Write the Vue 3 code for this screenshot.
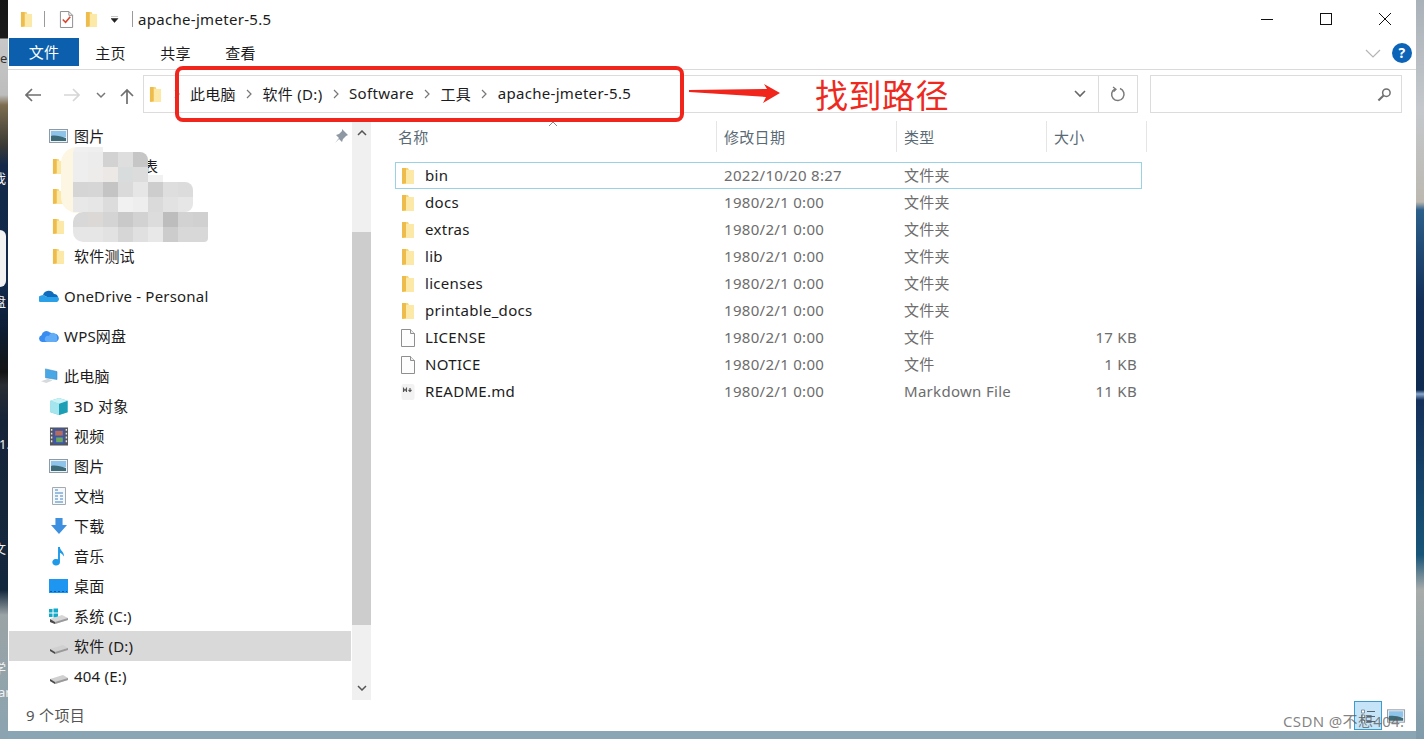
<script setup>
const tabs = ['主页', '共享', '查看']
const crumbs = ['此电脑', '软件 (D:)', 'Software', '工具', 'apache-jmeter-5.5']
const nav = [
  { label: '图片', icon: 'pic', depth: 1 },
  { label: '表', icon: 'folder', depth: 1, tail: true },
  { label: '', icon: 'folder', depth: 1 },
  { label: '', icon: 'folder', depth: 1 },
  { label: '软件测试', icon: 'folder', depth: 1 },
  { label: 'OneDrive - Personal', icon: 'onedrive', depth: 0, group: true },
  { label: 'WPS网盘', icon: 'wps', depth: 0, group: true },
  { label: '此电脑', icon: 'pc', depth: 0, group: true },
  { label: '3D 对象', icon: 'cube', depth: 1 },
  { label: '视频', icon: 'film', depth: 1 },
  { label: '图片', icon: 'pic', depth: 1 },
  { label: '文档', icon: 'doc', depth: 1 },
  { label: '下载', icon: 'down', depth: 1 },
  { label: '音乐', icon: 'note', depth: 1 },
  { label: '桌面', icon: 'desk', depth: 1 },
  { label: '系统 (C:)', icon: 'cdrive', depth: 1 },
  { label: '软件 (D:)', icon: 'drive', depth: 1, selected: true },
  { label: '404 (E:)', icon: 'drive', depth: 1 }
]
const files = [
  { name: 'bin', date: '2022/10/20 8:27', type: '文件夹', size: '', icon: 'folder', focus: true },
  { name: 'docs', date: '1980/2/1 0:00', type: '文件夹', size: '', icon: 'folder' },
  { name: 'extras', date: '1980/2/1 0:00', type: '文件夹', size: '', icon: 'folder' },
  { name: 'lib', date: '1980/2/1 0:00', type: '文件夹', size: '', icon: 'folder' },
  { name: 'licenses', date: '1980/2/1 0:00', type: '文件夹', size: '', icon: 'folder' },
  { name: 'printable_docs', date: '1980/2/1 0:00', type: '文件夹', size: '', icon: 'folder' },
  { name: 'LICENSE', date: '1980/2/1 0:00', type: '文件', size: '17 KB', icon: 'blank' },
  { name: 'NOTICE', date: '1980/2/1 0:00', type: '文件', size: '1 KB', icon: 'blank' },
  { name: 'README.md', date: '1980/2/1 0:00', type: 'Markdown File', size: '11 KB', icon: 'md' }
]
const columns = ['名称', '修改日期', '类型', '大小']
const mosaic = [
  ['#f0f0f0', '#efefef'],
  ['#eeeeee', '#ececec', '#d2d2d2', '#dedede', '#c6c6c6'],
  ['#eeeeee', '#eeeceb', '#ebe8e6', '#d9dcdc', '#dcdcdc'],
  ['#d5d5d5', '#d6d6d6', '#c4c4c4', '#dadada', '#e6e6e6', '#cdcdcd', '#dedede', '#dcdcdc'],
  ['#e8e8e8', '#e6e6e6', '#dcdcdc', '#f1f1f1', '#eeeeee', '#dadada', '#e2e2e2', '#e6e6e6'],
  ['#d8d8d8', '#dcd8d6', '#d4d4d4', '#c9c9c9', '#d2d2d2', '#dcdcdc', '#bdbdbd', '#d2d2d2', '#d0d0d0'],
  ['#e6e6e6', '#e6e6e6', '#e2e2e2', '#d6d6d6', '#e0e0e0', '#e8e8e8', '#cccccc', '#d8d8d8', '#d8d8d8']
]
</script>

<template>
  <div class="desktop">
    <svg class="sprite" width="0" height="0" aria-hidden="true">
      <symbol id="i-folder" viewBox="0 0 14 18">
        <path d="M2 1h5l1 2h4v14H2z" fill="#f8d775" />
        <path d="M5 3h8v14H5z" fill="#fce9a8" />
        <path d="M1 1h4v15l-4 1z" fill="#eebb4d" />
      </symbol>
      <symbol id="i-check" viewBox="0 0 16 20">
        <path d="M1.5 1.5h9l4 4v13h-13z" fill="#fff" stroke="#8a8a8a" />
        <path d="M10.5 1.5v4h4" fill="none" stroke="#8a8a8a" />
        <path d="M4 10l3 3 5-6" fill="none" stroke="#d9472f" stroke-width="1.7" />
      </symbol>
      <symbol id="i-pic" viewBox="0 0 20 16">
        <rect x=".5" y="1.5" width="18" height="13" fill="#eef3f8" stroke="#8e9aa6" />
        <rect x="2" y="3" width="15" height="6" fill="#8fc4ea" />
        <path d="M2 13V8c4-1 9 0 15 2v3z" fill="#3d6b78" />
      </symbol>
      <symbol id="i-onedrive" viewBox="0 0 20 14">
        <path d="M4 6a6 6 0 0 1 11-1 4 4 0 0 1 4 3H8z" fill="#0f6cbd" />
        <path d="M1 13a3.5 3.5 0 0 1 1-6.500C5 5 6 7 8 8h11a3 3 0 0 1-1 5z" fill="#29a0e8" />
      </symbol>
      <symbol id="i-wps" viewBox="0 0 20 14">
        <path d="M3 13a3.500 3.500 0 0 1-.5-6.800A5 5 0 0 1 11 3.500 4 4 0 0 1 14 5a4 4 0 0 1 3 8z" fill="#3a8df0" />
        <path d="M8 13a3 3 0 0 1 2-6 4 4 0 0 1 8 2 3 3 0 0 1-2 4z" fill="#63adf6" />
      </symbol>
      <symbol id="i-pc" viewBox="0 0 20 18">
        <path d="M6 1l13 3v9l-13-2z" fill="#49a7e6" stroke="#3b87bd" stroke-width=".6" />
        <path d="M1 15l8-3 5 2-7 3z" fill="#d7dadc" />
      </symbol>
      <symbol id="i-cube" viewBox="0 0 20 20">
        <path d="M10 1l9 3v12l-9 3-9-3V4z" fill="#57c6d6" />
        <path d="M1 4l9 3v12l-9-3z" fill="#a5e6ee" />
        <path d="M19 4l-9 3v12l9-3z" fill="#1c9fb5" />
        <path d="M10 1l9 3-9 3-9-3z" fill="#c9f2f6" />
      </symbol>
      <symbol id="i-film" viewBox="0 0 20 20">
        <rect x=".5" y=".5" width="19" height="19" fill="#55565a" />
        <rect x="4" y="2" width="12" height="16" fill="#3f57a8" />
        <path d="M6 4h8v5H6z" fill="#b86b5a" />
        <path d="M7 11h7v5H7z" fill="#6ca75c" />
        <path d="M1.500 2h1.500v2H1.500zM1.500 6h1.500v2H1.500zM1.500 10h1.500v2H1.500zM1.500 14h1.500v2H1.500zM17 2h1.500v2H17zM17 6h1.500v2H17zM17 10h1.500v2H17zM17 14h1.500v2H17z" fill="#e8e8e8" />
      </symbol>
      <symbol id="i-doc" viewBox="0 0 16 18">
        <path d="M1.500.5h13v17h-13z" fill="#f6f9fc" stroke="#a2aab2" />
        <path d="M4 3h3M4 6h8M4 9h3M9 9h3M4 12h3M9 12h3M4 15h8" stroke="#3f82c4" stroke-width="1.100" />
      </symbol>
      <symbol id="i-down" viewBox="0 0 20 18">
        <path d="M6 0h8v8h5l-9 10L1 8h5z" fill="#3d8fe0" />
      </symbol>
      <symbol id="i-note" viewBox="0 0 14 20">
        <path d="M6 0h2c0 4 5 5 4 10-1-2-2-3-4-4v10a4 3.500 0 1 1-2-3z" fill="#1f9ae8" />
      </symbol>
      <symbol id="i-desk" viewBox="0 0 20 14">
        <rect width="19" height="14" fill="#1c96f0" />
        <path d="M1 12.500h17" stroke="#0d5aa8" stroke-dasharray="2 2" />
      </symbol>
      <symbol id="i-drive" viewBox="0 0 20 10">
        <path d="M1 5l13-4 5 3v2L6 10 1 7z" fill="#d0d0d0" />
        <path d="M1 5l5 3v2L1 7z" fill="#4a4a4a" />
        <path d="M6 8l13-4v2L6 10z" fill="#9a9a9a" />
      </symbol>
      <symbol id="i-cdrive" viewBox="0 0 20 16">
        <path d="M0 1h3.500v3.500H0zM4.500.5H9v4H4.500zM0 5.500h3.500V9H0zM4.500 5.500H9v4H4.500z" fill="#13a9c9" />
        <path d="M1 11l12-4 6 3v2L6 16l-5-2z" fill="#d6d6d6" />
        <path d="M1 11l5 3v2l-5-2z" fill="#4a4a4a" />
        <path d="M6 14l13-4v2L6 16z" fill="#9a9a9a" />
      </symbol>
      <symbol id="i-blank" viewBox="0 0 14 18">
        <path d="M.5.5h9l4 4v13H.5z" fill="#fdfdfd" stroke="#8f8f8f" />
        <path d="M9.500.5v4h4" fill="#efefef" stroke="#8f8f8f" />
      </symbol>
      <symbol id="i-md" viewBox="0 0 14 18">
        <rect x=".5" y="1" width="13" height="16" rx="2" fill="#f2f2f2" />
        <path d="M2.500 9V5.500l1.500 2 1.500-2V9M9 5v3.500M7.500 7L9 8.500 10.500 7" fill="none" stroke="#555" stroke-width="1.100" />
      </symbol>
    </svg>

    <span class="bit card"></span>
    <span class="bit t-e">e</span>
    <span class="bit t-wo">我</span>
    <span class="bit t-pan">盘</span>
    <span class="bit t-one">1.</span>
    <span class="bit t-wen">文</span>
    <span class="bit t-xue">学</span>
    <span class="bit t-ar">ar</span>

    <div class="window">
      <header class="titlebar">
        <svg class="qa-folder"><use href="#i-folder" /></svg>
        <i class="qa-sep"></i>
        <svg class="qa-check"><use href="#i-check" /></svg>
        <svg class="qa-folder second"><use href="#i-folder" /></svg>
        <svg class="qa-drop" viewBox="0 0 8 7"><path d="M0 0h7M0 2.500h7L3.500 6.500z" fill="#222" stroke="#222" stroke-width=".5" /></svg>
        <i class="qa-sep last"></i>
        <span class="title">apache-jmeter-5.5</span>
        <div class="controls">
          <svg class="ctl" viewBox="0 0 18 18"><path d="M3 9.500h12" stroke="#111" fill="none" /></svg>
          <svg class="ctl" viewBox="0 0 18 18"><rect x="3.500" y="3.500" width="11" height="11" stroke="#111" fill="none" /></svg>
          <svg class="ctl" viewBox="0 0 18 18"><path d="M3 3l12 12M15 3L3 15" stroke="#111" fill="none" /></svg>
        </div>
      </header>

      <div class="ribbon">
        <div class="tab-file">文件</div>
        <div v-for="t in tabs" :key="t" class="tab">{{ t }}</div>
        <svg class="rib-chev" viewBox="0 0 16 9"><path d="M1 1l7 7 7-7" fill="none" stroke="#b5b5b5" stroke-width="1.200" /></svg>
        <div class="help">?</div>
      </div>

      <div class="navbar">
        <svg class="nb back" viewBox="0 0 16 14"><path d="M1 7h15M7 1L1 7l6 6" fill="none" stroke="#6f6f6f" stroke-width="1.700" /></svg>
        <svg class="nb fwd" viewBox="0 0 16 14"><path d="M0 7h15M9 1l6 6-6 6" fill="none" stroke="#d6d6d6" stroke-width="1.700" /></svg>
        <svg class="nb recent" viewBox="0 0 10 7"><path d="M1 1l4 4 4-4" fill="none" stroke="#777" stroke-width="1.500" /></svg>
        <svg class="nb up" viewBox="0 0 14 16"><path d="M7 16V2M1 8l6-6 6 6" fill="none" stroke="#6f6f6f" stroke-width="1.700" /></svg>
        <div class="address">
          <svg class="addr-folder"><use href="#i-folder" /></svg>
          <svg class="crumb-chev first" viewBox="0 0 6 10"><path d="M1 1l4 4-4 4" fill="none" stroke="#777" stroke-width="1.200" /></svg>
          <template v-for="(c, i) in crumbs" :key="c">
            <span class="crumb">{{ c }}</span>
            <span v-if="i < crumbs.length - 1" class="chev-box">
              <svg class="crumb-chev" viewBox="0 0 6 10"><path d="M1 1l4 4-4 4" fill="none" stroke="#777" stroke-width="1.200" /></svg>
            </span>
          </template>
          <svg class="addr-drop" viewBox="0 0 12 8"><path d="M1 1l5 5 5-5" fill="none" stroke="#666" stroke-width="1.600" /></svg>
          <div class="refresh">
            <svg viewBox="0 0 16 16" width="16" height="16"><path d="M10 2.500a6.200 6.200 0 1 1-5 .3" fill="none" stroke="#7a7a7a" stroke-width="1.500" /><path d="M3 1l3 2.300-2.500 2.500" fill="none" stroke="#7a7a7a" stroke-width="1.300" /></svg>
          </div>
        </div>
        <div class="search">
          <svg viewBox="0 0 16 16" width="15" height="15"><circle cx="10" cy="6" r="4" fill="none" stroke="#6f6f6f" stroke-width="1.600" /><path d="M7 9l-5.500 5.500" stroke="#6f6f6f" stroke-width="2.200" /></svg>
        </div>
      </div>

      <div class="main">
        <aside class="sidebar">
          <div v-for="(n, i) in nav" :key="i" class="nav-row" :class="{ group: n.group, sel: n.selected, d1: n.depth === 1 }">
            <svg class="nav-ico" :class="'ic-' + n.icon"><use :href="'#i-' + n.icon" /></svg>
            <span class="nav-label" :class="{ tail: n.tail }">{{ n.label }}</span>
          </div>
          <svg class="pin" viewBox="0 0 14 14"><path d="M8 0l6 6-2 1-3 3-1 3-3-3-4 4 4-5-3-3 3-1 3-3z" fill="#8d98a3" /></svg>
          <div class="cream"></div>
          <div class="patch"></div>
          <div class="mosaic">
            <div v-for="(r, ri) in mosaic" :key="ri" class="mos-row">
              <i v-for="(c, ci) in r" :key="ci" :style="{ background: c }"></i>
            </div>
          </div>
        </aside>

        <div class="scrollbar">
          <svg class="sb-arrow" viewBox="0 0 10 6"><path d="M1 5l4-4 4 4" fill="none" stroke="#555" stroke-width="1.500" /></svg>
          <div class="sb-track"><div class="sb-thumb"></div></div>
          <svg class="sb-arrow" viewBox="0 0 10 6"><path d="M1 1l4 4 4-4" fill="none" stroke="#555" stroke-width="1.500" /></svg>
        </div>

        <section class="files">
          <svg class="sort" viewBox="0 0 10 6"><path d="M1 5l4-4 4 4" fill="none" stroke="#8a8a8a" /></svg>
          <div class="file-head">
            <div v-for="c in columns" :key="c" class="col">{{ c }}</div>
          </div>
          <div v-for="f in files" :key="f.name" class="file-row" :class="{ focus: f.focus }">
            <div class="f-name">
              <svg class="f-ico"><use :href="'#i-' + f.icon" /></svg>
              <span>{{ f.name }}</span>
            </div>
            <div class="f-meta">{{ f.date }}</div>
            <div class="f-meta">{{ f.type }}</div>
            <div class="f-meta f-size">{{ f.size }}</div>
          </div>
        </section>
      </div>

      <footer class="status">
        <span>9 个项目</span>
        <div class="views">
          <div class="view on">
            <svg viewBox="0 0 16 16" width="16" height="16"><path d="M1.500 2h3v3h-3zM1.500 7h3v3h-3zM1.500 12h3v3h-3z" fill="#fff" stroke="#6b7b86" stroke-width=".8" /><path d="M7 3.500h8M7 8.500h8M7 13.500h8" stroke="#55646e" /></svg>
          </div>
          <svg class="view-pic"><use href="#i-pic" /></svg>
        </div>
      </footer>
    </div>

    <div class="callout"></div>
    <svg class="callout-arrow" viewBox="0 0 92 22"><path d="M0 8V10L77 15 74 21 91 11 75 2 78 7z" fill="#f0261c" /></svg>
    <div class="callout-text">找到路径</div>
    <div class="watermark">CSDN @不想404.</div>
  </div>
</template>

<style scoped>
.desktop {
  position: relative;
  width: 1424px;
  height: 739px;
  overflow: hidden;
  font-family: "Noto Sans", "Noto Sans CJK SC", sans-serif;
  font-size: 15px;
  letter-spacing: .3px;
  color: #1c1c1c;
  background:
    linear-gradient(#161616 0, #1a1a1a 38px, #c8c8c8 39px, #bdbdbd 95px, #7d6d50 105px, #3b3a35 145px, #14294a 165px, #10284a 290px, #0d1d33 330px, #141414 372px, #2a2d33 385px, #162438 420px, #14283d 590px, #9aa3a5 615px, #8ba4b1 739px) left top / 8px 100% no-repeat,
    linear-gradient(#aab2b9 0, #c4c8cc 110px, #bcb8b0 202px, #2c5f8b 210px, #12305a 300px, #0f2a50 390px, #8aa8cf 394px, #15305a 400px, #175578 555px, #a8acaa 590px, #7f9bab 739px) right top / 8px 100% no-repeat,
    #8aa5b3;
}
.sprite { position: absolute; }
.bit { position: absolute; color: #f2f2f2; font-size: 13px; line-height: 16px; letter-spacing: 0; }
.card { left: -6px; top: 230px; width: 12px; height: 57px; background: #f2f2f2; border-radius: 6px; }
.t-e { left: 0; top: 50px; color: #333; }
.t-wo { left: -7px; top: 170px; }
.t-pan { left: -7px; top: 293px; }
.t-one { left: -1px; top: 436px; }
.t-wen { left: -7px; top: 540px; }
.t-xue { left: -7px; top: 660px; }
.t-ar { left: -2px; top: 684px; }

.window {
  position: relative;
  width: 1408px;
  height: 731px;
  margin-left: 8px;
  background: #fff;
  display: flex;
  flex-direction: column;
}

.titlebar { height: 38px; display: flex; align-items: center; padding-left: 12px; flex: none; }
.qa-folder { width: 13px; height: 17px; }
.qa-folder.second { margin-left: 11px; }
.qa-sep { width: 1px; height: 16px; background: #9a9a9a; margin-left: 11px; }
.qa-sep.last { margin-left: 13px; }
.qa-check { width: 15px; height: 19px; margin-left: 14px; }
.qa-drop { width: 8px; height: 7px; margin-left: 13px; }
.title { margin-left: 5px; line-height: 38px; }
.controls { margin-left: auto; display: flex; margin-right: 22px; gap: 41px; }
.ctl { width: 18px; height: 18px; }

.ribbon { height: 32px; flex: none; border-bottom: 1px solid #dadada; display: flex; align-items: flex-start; padding-left: 1px; box-sizing: border-box; }
.tab-file { width: 70px; height: 28px; background: #0b5fac; color: #fff; text-align: center; line-height: 28px; }
.tab { width: 65px; line-height: 30px; text-align: center; }
.tab:nth-child(2) { margin-left: -1px; }
.rib-chev { width: 16px; height: 9px; margin: 11px 0 0 auto; }
.help { width: 20px; height: 20px; border-radius: 50%; background: #0c64b8; color: #fff; font-weight: 700; font-size: 14px; line-height: 20px; text-align: center; margin: 5px 4px 0 11px; }

.navbar { height: 51px; flex: none; display: flex; align-items: flex-start; position: relative; padding-top: 5px; box-sizing: border-box; }
.nb { flex: none; margin-top: 13px; }
.back { width: 16px; height: 14px; margin-left: 17px; }
.fwd { width: 16px; height: 14px; margin-left: 23px; }
.recent { width: 10px; height: 7px; margin: 17px 0 0 16px; }
.up { width: 14px; height: 16px; margin-left: 14px; }
.address { width: 995px; height: 38px; margin-left: 9px; border: 1px solid #dcdcdc; box-sizing: border-box; display: flex; align-items: center; flex: none; }
.addr-folder { width: 13px; height: 17px; margin-left: 5px; flex: none; }
.crumb-chev { width: 6px; height: 10px; flex: none; }
.crumb-chev.first { margin: 0 10px 0 12px; }
.chev-box { width: 26.6px; display: flex; justify-content: center; flex: none; }
.crumb { white-space: nowrap; padding-bottom: 2px; }
.addr-drop { width: 12px; height: 8px; margin-left: auto; }
.refresh { width: 39px; height: 100%; margin-left: 12px; border-left: 1px solid #dcdcdc; box-sizing: border-box; display: flex; align-items: center; justify-content: center; }
.search { width: 252px; height: 38px; margin-left: 12px; border: 1px solid #dcdcdc; box-sizing: border-box; display: flex; align-items: center; justify-content: flex-end; padding-right: 9px; flex: none; }

.main { flex: 1; display: flex; min-height: 0; }
.sidebar { width: 342px; padding-left: 1px; flex: none; position: relative; overflow: hidden; }
.nav-row { height: 30px; display: flex; align-items: center; padding-left: 30px; box-sizing: border-box; white-space: nowrap; letter-spacing: .2px; }
.nav-row.d1 { padding-left: 40px; }
.nav-row.group { margin-top: 10px; }
.nav-row.sel { background: #d9d9d9; }
.nav-label { line-height: 20px; }
.nav-ico { width: 20px; height: 16px; margin-right: 5px; flex: none; }
.ic-folder { width: 13px; height: 17px; margin-left: 3px; margin-right: 9px; }
.ic-cube, .ic-film { height: 19px; }
.ic-doc { height: 18px; }
.ic-note { height: 19px; }
.ic-drive { height: 10px; margin-top: 6px; }
.tail { margin-left: 69px; }
.pin { position: absolute; right: 3px; top: 8px; width: 14px; height: 14px; }
.cream { position: absolute; left: 53px; top: 26px; width: 30px; height: 66px; background: #fdf6e3; border-radius: 16px 0 0 16px; }
.patch { position: absolute; left: 140px; top: 54px; width: 15px; height: 7px; background: #f1f1f1; }
.mosaic { position: absolute; left: 65px; top: 26px; }
.mos-row { display: flex; height: 15px; }
.mos-row:first-child { height: 5px; }
.mos-row i { width: 15px; height: 100%; display: block; }
.mos-row:first-child i:first-child { border-top-left-radius: 5px; }
.mos-row:nth-child(2) i:last-child { border-top-right-radius: 8px; }
.mos-row:nth-child(4) i:last-child { border-top-right-radius: 8px; }
.mos-row:nth-child(5) i:last-child { border-bottom-right-radius: 8px; }
.mos-row:nth-child(6) i:first-child { border-top-left-radius: 10px; }
.mos-row:nth-child(7) i:first-child { border-bottom-left-radius: 10px; }
.mos-row:nth-child(7) i:last-child { border-bottom-right-radius: 4px; }

.scrollbar { width: 19px; margin-left: 1px; background: #f0f0f0; display: flex; flex-direction: column; align-items: center; flex: none; }
.sb-arrow { width: 10px; height: 6px; margin: 9px 0; flex: none; }
.sb-track { flex: 1; width: 100%; padding-top: 87px; padding-bottom: 51px; box-sizing: border-box; display: flex; }
.sb-thumb { flex: 1; background: #cdcdcd; }

.files { flex: 1; padding-left: 24px; position: relative; min-width: 0; }
.sort { position: absolute; left: 177px; top: 0; width: 10px; height: 6px; }
.file-head { display: flex; height: 41px; margin-left: -4px; align-items: flex-start; color: #5a6a75; }
.col { height: 31px; line-height: 33px; padding-left: 7px; border-right: 1px solid #e5e5e5; box-sizing: border-box; }
.col:nth-child(1) { width: 326px; }
.col:nth-child(2) { width: 180px; }
.col:nth-child(3) { width: 150px; }
.col:nth-child(4) { width: 100px; }
.file-row { display: grid; grid-template-columns: 329px 180px 143px 91px; width: 747px; height: 27px; align-items: center; box-sizing: border-box; line-height: 27px; }
.file-row.focus { outline: 1px solid #99d1e5; outline-offset: -1px; }
.f-name { display: flex; align-items: center; white-space: nowrap; }
.f-ico { width: 14px; height: 18px; margin-left: 6px; margin-right: 10px; flex: none; }
.f-meta { color: #6d6d6d; white-space: nowrap; }
.f-size { text-align: right; padding-right: 1px; }

.status { height: 31px; flex: none; display: flex; align-items: center; padding-left: 18px; padding-bottom: 2px; box-sizing: border-box; color: #555; position: relative; }
.views { margin-left: auto; display: flex; align-items: center; margin-right: 10px; gap: 5px; margin-top: 2px; }
.view { width: 28px; height: 29px; background: #c6e4f8; border: 1px solid #3b9ccf; box-sizing: border-box; display: flex; align-items: center; justify-content: center; }
.view-pic { width: 19px; height: 16px; }

.callout { position: absolute; left: 175px; top: 66px; width: 509px; height: 56px; border: 4px solid #f0261c; border-radius: 8px; box-sizing: border-box; }
.callout-arrow { position: absolute; left: 689px; top: 82px; width: 92px; height: 22px; }
.callout-text { position: absolute; left: 815px; top: 70px; font-size: 33px; line-height: 48px; letter-spacing: .5px; color: #ee2a1f; font-family: "Noto Sans CJK SC", sans-serif; white-space: nowrap; }
.watermark { position: absolute; left: 1283px; top: 711px; color: rgba(90, 90, 90, .75); font-size: 15px; line-height: 20px; letter-spacing: .35px; white-space: nowrap; }
</style>
